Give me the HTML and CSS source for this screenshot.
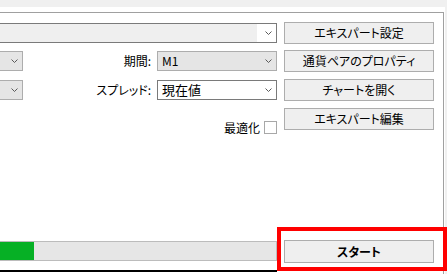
FILE: index.html
```html
<!DOCTYPE html>
<html lang="ja">
<head>
    <meta charset="UTF-8">
    <meta name="viewport" content="width=device-width, initial-scale=1.0">
    <title>テスター</title>
    <link rel="stylesheet" href="styles.css">
</head>
<body>

    <div class="top-strip"></div>

    <div class="panel">
        <div class="frame">

            <div class="settings">
                <div class="field">
                    <div class="combo combo-edit combo-wide">
                        <span class="combo-text"></span>
                        <span class="combo-arrow"><svg width="7" height="4" viewBox="0 0 7 4"><polyline points="0.5,0.5 3.5,3.5 6.5,0.5" /></svg></span>
                    </div>
                </div>
                <button class="btn">エキスパート設定</button>

                <div class="field field-split">
                    <div class="combo combo-off combo-stub">
                        <span class="combo-arrow"><svg width="7" height="4" viewBox="0 0 7 4"><polyline points="0.5,0.5 3.5,3.5 6.5,0.5" /></svg></span>
                    </div>
                    <label class="label">期間:</label>
                    <div class="combo combo-off">
                        <span class="combo-text">M1</span>
                        <span class="combo-arrow"><svg width="7" height="4" viewBox="0 0 7 4"><polyline points="0.5,0.5 3.5,3.5 6.5,0.5" /></svg></span>
                    </div>
                </div>
                <button class="btn">通貨ペアのプロパティ</button>

                <div class="field field-split">
                    <div class="combo combo-off combo-stub">
                        <span class="combo-arrow"><svg width="7" height="4" viewBox="0 0 7 4"><polyline points="0.5,0.5 3.5,3.5 6.5,0.5" /></svg></span>
                    </div>
                    <label class="label">スプレッド:</label>
                    <div class="combo combo-on">
                        <span class="combo-text combo-text-big">現在値</span>
                        <span class="combo-arrow"><svg width="7" height="4" viewBox="0 0 7 4"><polyline points="0.5,0.5 3.5,3.5 6.5,0.5" /></svg></span>
                    </div>
                </div>
                <button class="btn">チャートを開く</button>

                <div class="field field-check">
                    <label class="label">最適化</label>
                    <span class="checkbox"></span>
                </div>
                <button class="btn">エキスパート編集</button>
            </div>

            <div class="run">
                <div class="progress"><div class="progress-fill" style="width: 34px"></div></div>
                <button class="btn btn-start">スタート</button>
                <div class="rule"></div>
            </div>

        </div>
    </div>

    <div class="highlight"></div>

</body>
</html>
```

FILE: styles.css
```css
html, body {
    margin: 0;
    padding: 0;
}

body {
    position: relative;
    width: 447px;
    height: 274px;
    overflow: hidden;
    background: #f0f0f0;
    font-family: "Noto Sans CJK JP", "Noto Sans", sans-serif;
    font-size: 12px;
    font-feature-settings: "palt";
    color: #000;
}

.top-strip {
    height: 7px;
}

.panel {
    width: 445px;
    height: 267px;
    padding-top: 5px;
    box-sizing: border-box;
    background: white;
}

.frame {
    width: 444px;
    height: 262px;
    box-sizing: border-box;
    border-top: 1px solid #a0a0a0;
    border-right: 1px solid #a0a0a0;
}

.settings {
    display: grid;
    grid-template-columns: 277px 150px;
    grid-template-rows: 28px 29px 29px 22px;
    column-gap: 7px;
    padding-top: 9px;
    align-items: start;
}

.field {
    height: 22px;
}

.field-split {
    display: grid;
    grid-template-columns: 23px 1fr 120px;
    align-items: start;
}

.field-check {
    display: flex;
    justify-content: flex-end;
    align-items: center;
    gap: 4px;
    padding-top: 8px;
}

.label {
    height: 20px;
    line-height: 20px;
    margin-top: 1px;
    text-align: right;
    padding-right: 6px;
    white-space: nowrap;
}

.field-check .label {
    height: 13px;
    line-height: 13px;
    margin-top: 0;
    padding-right: 0;
}

.combo {
    display: flex;
    height: 20px;
    margin-top: 1px;
    box-sizing: border-box;
    border: 1px solid #7a7a7a;
    background: white;
}

.combo-wide {
    width: 278px;
    margin-left: -1px;
}

.combo-stub {
    width: 24px;
    margin-left: -1px;
}

.combo-edit .combo-text {
    background: #efefef;
}

.combo-off {
    background: #e5e5e5;
    border-color: #adadad;
}

.combo-text {
    flex: 1;
    padding-left: 4px;
    line-height: 18px;
    font-size: 12px;
}

.combo-text-big {
    font-size: 13px;
}

.combo-arrow {
    display: flex;
    width: 19px;
    justify-content: flex-end;
    align-items: center;
    padding-right: 4px;
    box-sizing: border-box;
    margin-left: auto;
}

.combo-arrow polyline {
    fill: none;
    stroke: #5a5a5a;
    stroke-width: 1;
}

.checkbox {
    width: 13px;
    height: 13px;
    box-sizing: border-box;
    border: 1px solid #a8a8a8;
    background: white;
}

.btn {
    width: 150px;
    height: 22px;
    padding: 0;
    border: 1px solid #adadad;
    background: #efefef;
    font-family: inherit;
    font-size: 12px;
    font-feature-settings: "palt";
    color: #000;
    line-height: 20px;
    text-align: center;
}

.run {
    display: grid;
    grid-template-columns: 277px 150px;
    column-gap: 7px;
    margin-top: 110px;
    align-items: start;
}

.progress {
    width: 278px;
    height: 20px;
    margin-left: -1px;
    margin-top: 1px;
    box-sizing: border-box;
    border: 1px solid #bcbcbc;
    background: #e6e6e6;
}

.progress-fill {
    height: 18px;
    background: #06b025;
}

.btn-start {
    height: 23px;
    font-weight: bold;
    line-height: 21px;
}

.rule {
    height: 2px;
    margin-top: 7px;
    background: #000;
}

.highlight {
    position: absolute;
    left: 277px;
    top: 227px;
    width: 170px;
    height: 44px;
    box-sizing: border-box;
    border: 4px solid #ff0000;
}
```
